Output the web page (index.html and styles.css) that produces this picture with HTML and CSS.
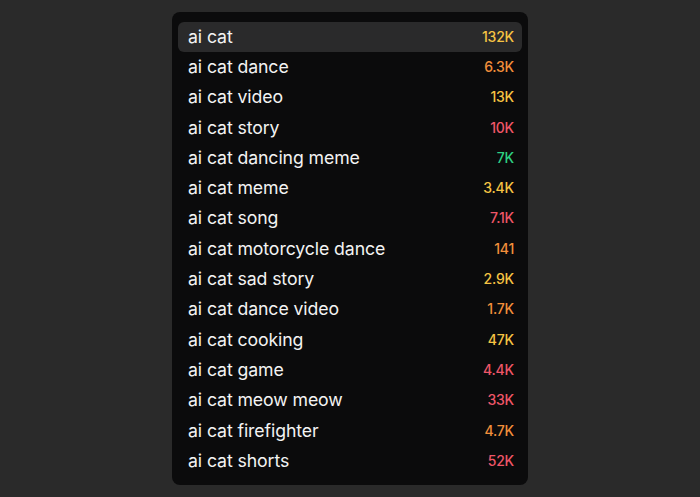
FILE: index.html
```html
<!DOCTYPE html>
<html>
<head>
<meta charset="utf-8">
<link rel="stylesheet" href="styles.css">
</head>
<body>
<div class="page">
  <ul class="list">
    <li class="row active"><span class="term">ai cat</span><span class="count yellow">132K</span></li>
    <li class="row"><span class="term">ai cat dance</span><span class="count orange">6.3K</span></li>
    <li class="row"><span class="term">ai cat video</span><span class="count yellow">13K</span></li>
    <li class="row"><span class="term">ai cat story</span><span class="count red">10K</span></li>
    <li class="row"><span class="term">ai cat dancing meme</span><span class="count green">7K</span></li>
    <li class="row"><span class="term">ai cat meme</span><span class="count yellow">3.4K</span></li>
    <li class="row"><span class="term">ai cat song</span><span class="count red">7.1K</span></li>
    <li class="row"><span class="term">ai cat motorcycle dance</span><span class="count orange">141</span></li>
    <li class="row"><span class="term">ai cat sad story</span><span class="count yellow">2.9K</span></li>
    <li class="row"><span class="term">ai cat dance video</span><span class="count orange">1.7K</span></li>
    <li class="row"><span class="term">ai cat cooking</span><span class="count yellow">47K</span></li>
    <li class="row"><span class="term">ai cat game</span><span class="count red">4.4K</span></li>
    <li class="row"><span class="term">ai cat meow meow</span><span class="count red">33K</span></li>
    <li class="row"><span class="term">ai cat firefighter</span><span class="count orange">4.7K</span></li>
    <li class="row"><span class="term">ai cat shorts</span><span class="count red">52K</span></li>
  </ul>
</div>
</body>
</html>
```
FILE: styles.css
```css
html, body {
  margin: 0;
  padding: 0;
  background: #2a2a2a;
}
body {
  font-family: Inter, "DejaVu Sans", sans-serif;
  width: 700px;
  height: 497px;
  overflow: hidden;
}
.page {
  display: flex;
  justify-content: center;
  padding-top: 12px;
}
.list {
  list-style: none;
  margin: 0;
  width: 344px;
  padding: 10px 6px 9px;
  background: #0b0b0c;
  border-radius: 8px;
}
.row {
  box-sizing: border-box;
  height: 30.3px;
  display: flex;
  align-items: center;
  justify-content: space-between;
  padding: 0 8px 2px 10px;
  border-radius: 6px;
}
.row.active {
  height: 30px;
  margin-bottom: 0.3px;
  background: #2a2a2b;
}
.term {
  color: #f3f3f3;
  font-size: 17.7px;
  letter-spacing: -0.1px;
}
.count {
  font-size: 14px;
  font-weight: 500;
  letter-spacing: -0.2px;
}
.yellow { color: #f6c343; }
.orange { color: #f28f3b; }
.red { color: #ef5668; }
.green { color: #2ed083; }
```
